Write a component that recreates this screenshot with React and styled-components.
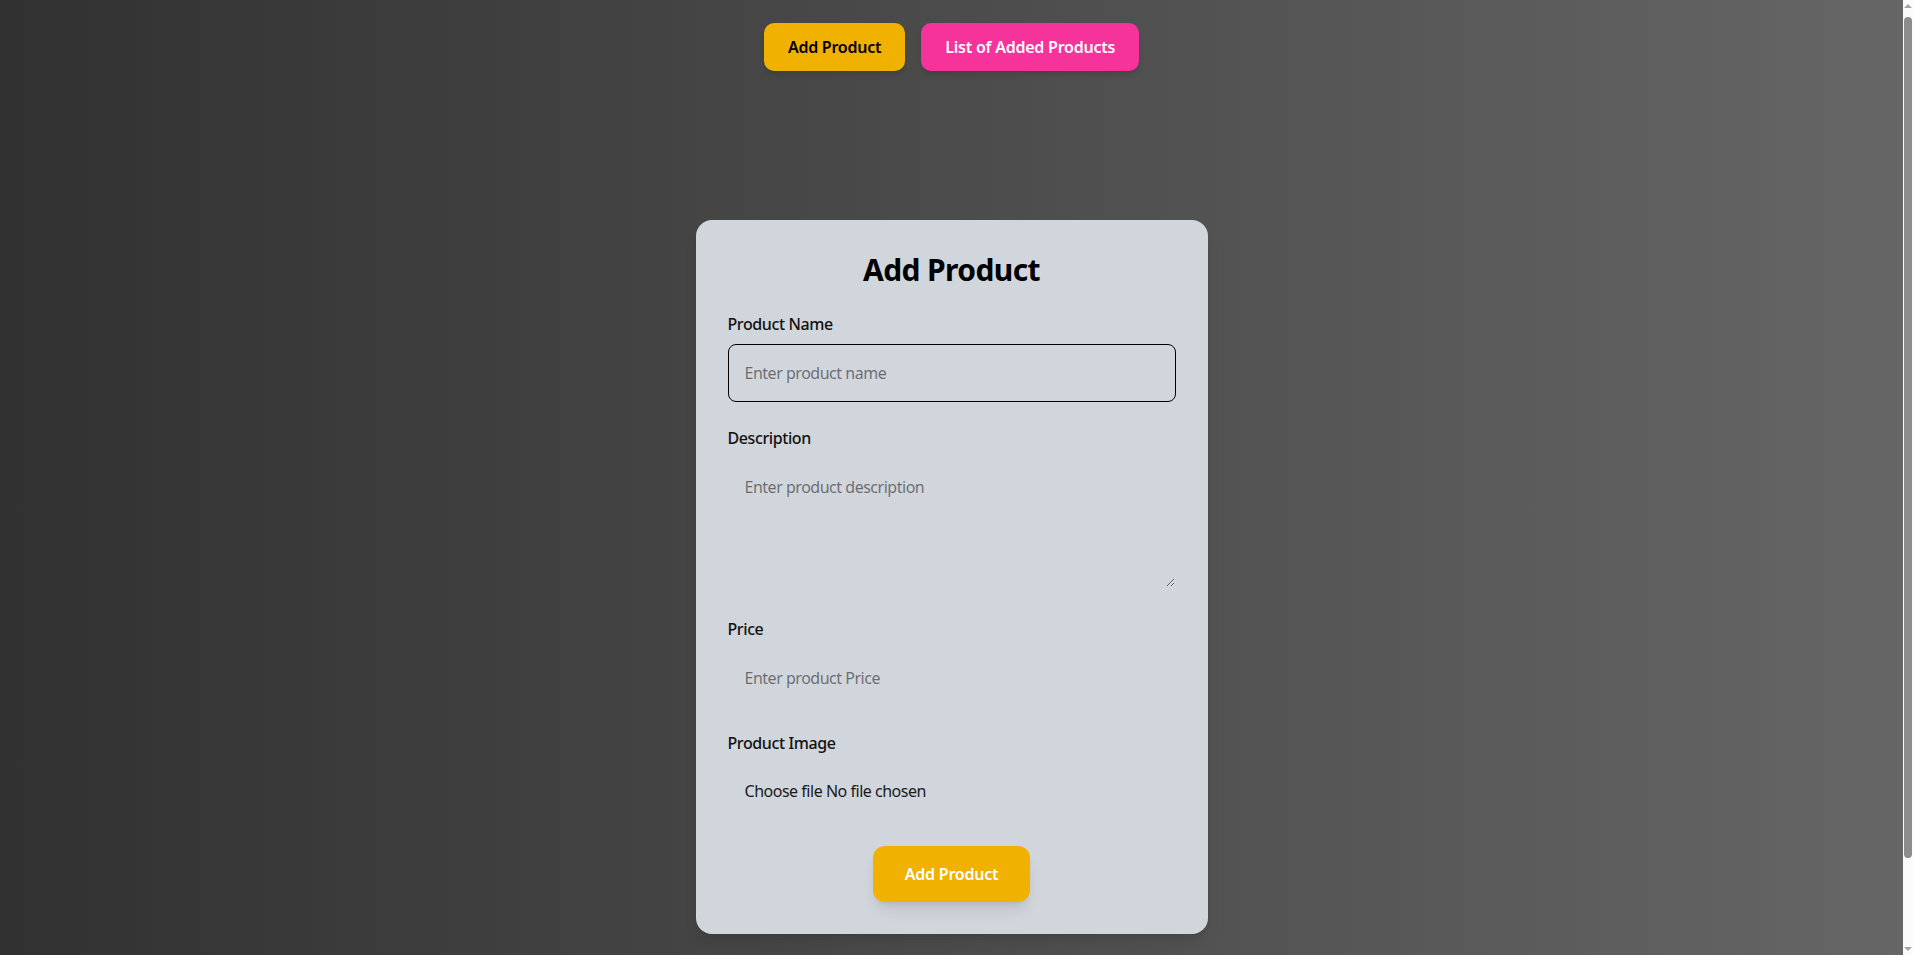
import React, { useState } from 'react';
import styled, { createGlobalStyle } from 'styled-components';

const GlobalStyle = createGlobalStyle`
  * {
    box-sizing: border-box;
  }
  html, body {
    margin: 0;
    padding: 0;
  }
  body {
    font-family: 'Noto Sans', 'Open Sans', sans-serif;
    background: #333;
  }
`;

const Page = styled.div`
  min-height: 100vh;
  background: linear-gradient(to right, #313131, #666666);
  padding: 23px 26px 36px 16px;
  display: flex;
  flex-direction: column;
  align-items: center;
`;

const Nav = styled.nav`
  display: flex;
  gap: 16px;
  justify-content: center;
`;

const NavButton = styled.button`
  font-family: inherit;
  font-size: 16px;
  font-weight: 600;
  line-height: 24px;
  letter-spacing: -0.015em;
  padding: 12px 24px;
  border: none;
  border-radius: 10px;
  cursor: pointer;
  background: ${(p) => (p.pink ? '#f6339a' : '#f0b100')};
  color: ${(p) => (p.pink ? '#fff' : '#000')};
  box-shadow: 0 4px 6px -1px rgba(0, 0, 0, 0.1), 0 2px 4px -2px rgba(0, 0, 0, 0.1);
`;

const Card = styled.form`
  margin-top: 149px;
  width: 512px;
  background: #d1d5dc;
  border-radius: 16px;
  padding: 32px;
  box-shadow: 0 10px 15px -3px rgba(0, 0, 0, 0.1), 0 4px 6px -4px rgba(0, 0, 0, 0.1);
`;

const Title = styled.h2`
  margin: 0 0 24px;
  text-align: center;
  font-size: 30px;
  line-height: 36px;
  font-weight: 700;
  letter-spacing: -0.02em;
  color: #000;
`;

const Field = styled.div`
  margin-bottom: ${(p) => p.mb || 24}px;
`;

const Label = styled.label`
  display: block;
  margin-bottom: 8px;
  font-size: 16px;
  line-height: 24px;
  font-weight: 500;
  letter-spacing: -0.025em;
  color: #111;
`;

const inputBase = `
  display: block;
  width: 100%;
  font-family: inherit;
  font-size: 16px;
  line-height: 24px;
  letter-spacing: -0.03em;
  padding: 16px;
  border: 1px solid transparent;
  border-radius: 8px;
  background: transparent;
  color: #111;
  outline: none;
  &::placeholder {
    color: rgba(0, 0, 0, 0.5);
  }
`;

const Input = styled.input`
  ${inputBase}
  border-color: ${(p) => (p.focused ? '#000' : 'transparent')};
`;

const TextArea = styled.textarea`
  ${inputBase}
  resize: vertical;
`;

const HiddenFile = styled.input`
  display: none;
`;

const FilePicker = styled.label`
  ${inputBase}
  padding: 15px 16px;
  cursor: pointer;
  color: #1a1a1a;
`;

const SubmitRow = styled.div`
  display: flex;
  justify-content: center;
`;

const SubmitButton = styled.button`
  font-family: inherit;
  font-size: 16px;
  font-weight: 600;
  line-height: 24px;
  letter-spacing: -0.015em;
  padding: 16px 32px;
  border: none;
  border-radius: 12px;
  background: #f0b100;
  color: #fff;
  cursor: pointer;
  box-shadow: 0 10px 15px -3px rgba(0, 0, 0, 0.1), 0 4px 6px -4px rgba(0, 0, 0, 0.1);
`;

// stand-in for the browser scrollbar seen in the screenshot
const ScrollTrack = styled.div`
  position: fixed;
  top: 0;
  right: 0;
  width: 10px;
  height: 100vh;
  background: #fbfbfb;
`;

const ScrollThumb = styled.div`
  position: absolute;
  top: 17px;
  left: 1px;
  width: 8px;
  height: 841px;
  border-radius: 4px;
  background: #8c8c8c;
`;

const ScrollArrow = styled.div`
  position: absolute;
  left: 1px;
  width: 0;
  height: 0;
  border-left: 4px solid transparent;
  border-right: 4px solid transparent;
  ${(p) =>
    p.down
      ? 'bottom: 4px; border-top: 4px solid #a3a3a3;'
      : 'top: 4px; border-bottom: 4px solid #a3a3a3;'}
`;

export default function App() {
  const [name, setName] = useState('');
  const [description, setDescription] = useState('');
  const [price, setPrice] = useState('');
  const [fileName, setFileName] = useState('');

  return (
    <>
      <GlobalStyle />
      <Page>
        <Nav>
          <NavButton type="button">Add Product</NavButton>
          <NavButton type="button" pink>
            List of Added Products
          </NavButton>
        </Nav>

        <Card onSubmit={(e) => e.preventDefault()}>
          <Title>Add Product</Title>

          <Field>
            <Label htmlFor="name">Product Name</Label>
            <Input
              id="name"
              focused
              placeholder="Enter product name"
              value={name}
              onChange={(e) => setName(e.target.value)}
            />
          </Field>

          <Field mb={29}>
            <Label htmlFor="description">Description</Label>
            <TextArea
              id="description"
              rows={4}
              placeholder="Enter product description"
              value={description}
              onChange={(e) => setDescription(e.target.value)}
            />
          </Field>

          <Field>
            <Label htmlFor="price">Price</Label>
            <Input
              id="price"
              type="number"
              placeholder="Enter product Price"
              value={price}
              onChange={(e) => setPrice(e.target.value)}
            />
          </Field>

          <Field mb={27}>
            <Label htmlFor="image">Product Image</Label>
            <HiddenFile
              id="image"
              type="file"
              onChange={(e) => setFileName(e.target.files[0]?.name || '')}
            />
            <FilePicker htmlFor="image">
              Choose file {fileName || 'No file chosen'}
            </FilePicker>
          </Field>

          <SubmitRow>
            <SubmitButton type="submit">Add Product</SubmitButton>
          </SubmitRow>
        </Card>
      </Page>
      <ScrollTrack>
        <ScrollArrow />
        <ScrollThumb />
        <ScrollArrow down />
      </ScrollTrack>
    </>
  );
}
